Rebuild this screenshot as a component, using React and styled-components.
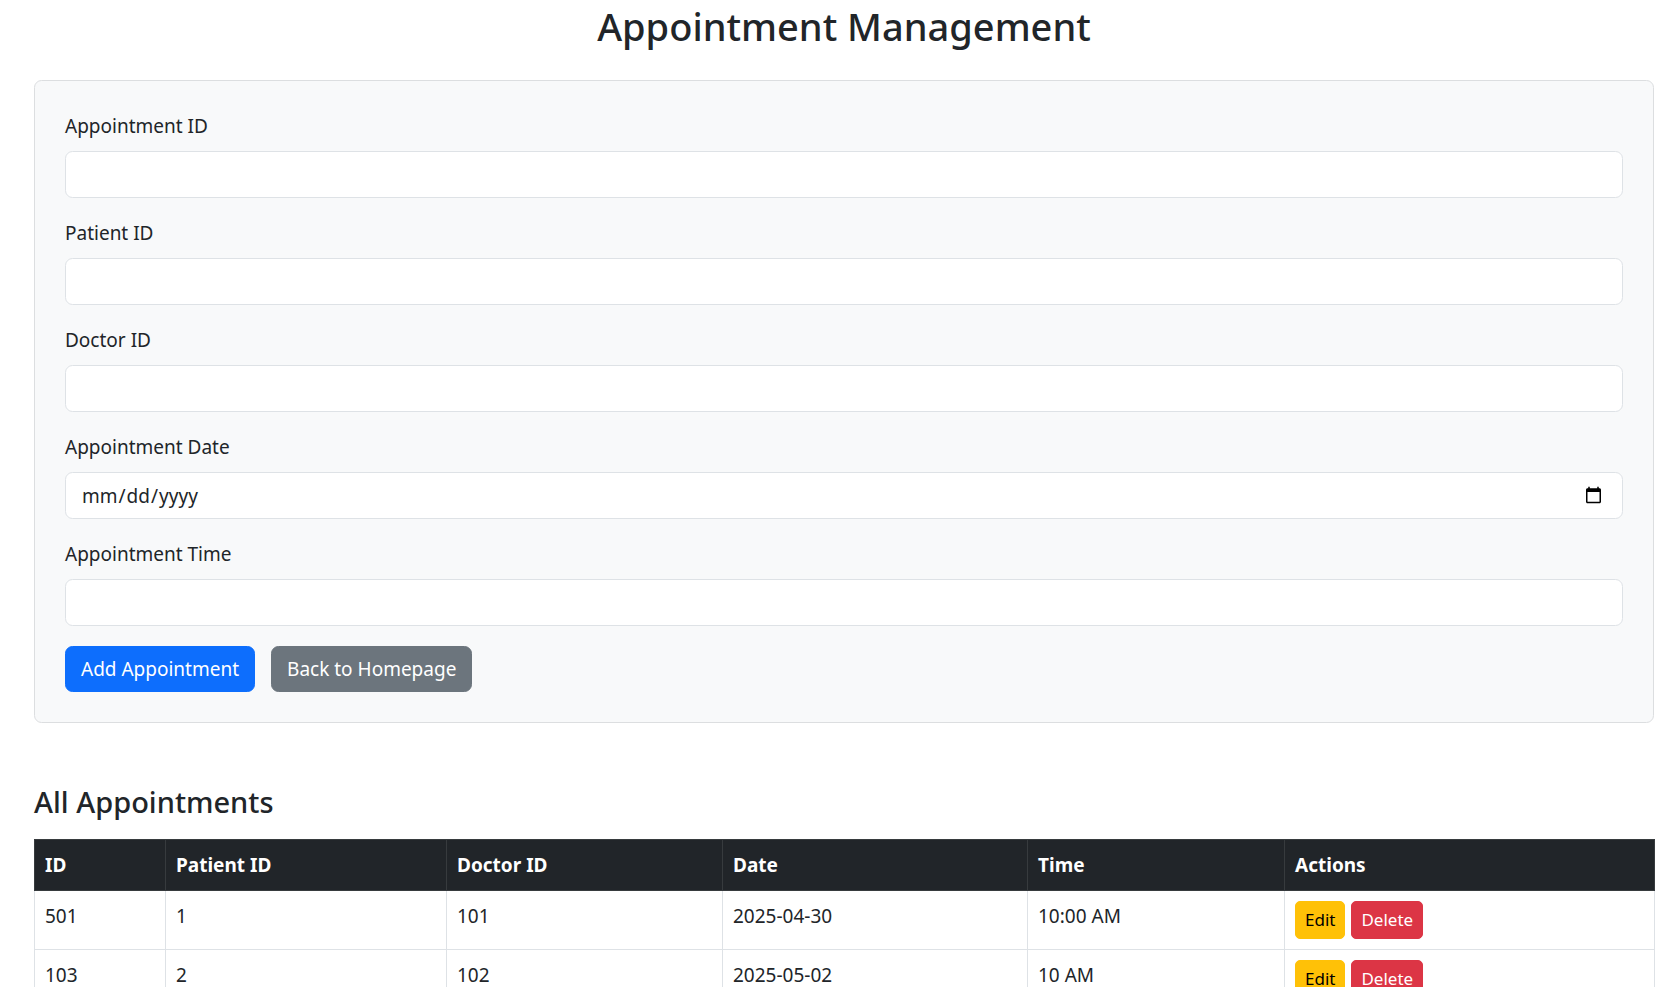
import styled, { createGlobalStyle } from 'styled-components';

const GlobalStyle = createGlobalStyle`
  * {
    box-sizing: border-box;
  }
  body {
    margin: 0;
    background: #fff;
    color: #212529;
    font-family: 'Noto Sans', 'Open Sans', sans-serif;
    font-size: 19px;
    line-height: 30px;
  }
`;

const Page = styled.div`
  padding: 2px 14px 40px 34px;
`;

const Title = styled.h1`
  margin: 0 0 30px;
  font-size: 38px;
  font-weight: 500;
  line-height: 48px;
  text-align: center;
`;

const FormCard = styled.form`
  background: #f8f9fa;
  border: 1px solid #dcdee0;
  border-radius: 7.5px;
  padding: 30px;
`;

const Field = styled.div`
  margin-bottom: 20px;
`;

const Label = styled.label`
  display: block;
  margin-bottom: 10px;
`;

const Input = styled.input`
  display: block;
  width: 100%;
  height: 47px;
  padding: 7px 15px;
  font: inherit;
  color: #212529;
  background: #fff;
  border: 1px solid #dee2e6;
  border-radius: 7.5px;
  outline: none;

  &::-webkit-calendar-picker-indicator {
    margin-right: 2px;
  }
`;

const ButtonRow = styled.div`
  display: flex;
  gap: 16px;
`;

const Button = styled.button`
  font-family: inherit;
  padding: ${p => (p.$small ? '5px 9px' : '7px 15px')};
  font-size: ${p => (p.$small ? '17px' : '19px')};
  line-height: ${p => (p.$small ? '26px' : '30px')};
  border-radius: ${p => (p.$small ? '5px' : '7.5px')};
  border: 1px solid ${p => p.$bg};
  background: ${p => p.$bg};
  color: ${p => p.$fg};
  cursor: pointer;
`;

const SectionTitle = styled.h3`
  margin: 61px 0 19px;
  font-size: 29px;
  font-weight: 500;
  line-height: 36px;
`;

const Table = styled.table`
  width: 100%;
  border-collapse: collapse;
  table-layout: fixed;
`;

const HeadCell = styled.th`
  text-align: left;
  font-weight: 700;
  padding: 10px;
  background: #212529;
  color: #fff;
  border: 1px solid #373b3e;
`;

const Cell = styled.td`
  vertical-align: top;
  padding: 10px;
  border: 1px solid #dee2e6;
`;

const Actions = styled.div`
  display: flex;
  gap: 6px;
`;

const fields = [
  { label: 'Appointment ID', type: 'text' },
  { label: 'Patient ID', type: 'text' },
  { label: 'Doctor ID', type: 'text' },
  { label: 'Appointment Date', type: 'date' },
  { label: 'Appointment Time', type: 'text' },
];

const columns = [
  { name: 'ID', width: 131 },
  { name: 'Patient ID', width: 281 },
  { name: 'Doctor ID', width: 276 },
  { name: 'Date', width: 305 },
  { name: 'Time', width: 257 },
  { name: 'Actions', width: 370 },
];

const appointments = [
  { id: 501, patient: 1, doctor: 101, date: '2025-04-30', time: '10:00 AM' },
  { id: 103, patient: 2, doctor: 102, date: '2025-05-02', time: '10 AM' },
  { id: 104, patient: 3, doctor: 103, date: '2025-05-05', time: '11:30 AM' },
];

export default function App() {
  return (
    <Page>
      <GlobalStyle />
      <Title>Appointment Management</Title>
      <FormCard onSubmit={e => e.preventDefault()}>
        {fields.map(f => (
          <Field key={f.label}>
            <Label>{f.label}</Label>
            <Input type={f.type} />
          </Field>
        ))}
        <ButtonRow>
          <Button type="submit" $bg="#0d6efd" $fg="#fff">Add Appointment</Button>
          <Button type="button" $bg="#6c757d" $fg="#fff">Back to Homepage</Button>
        </ButtonRow>
      </FormCard>

      <SectionTitle>All Appointments</SectionTitle>
      <Table>
        <colgroup>
          {columns.map(c => (
            <col key={c.name} style={{ width: c.width }} />
          ))}
        </colgroup>
        <thead>
          <tr>
            {columns.map(c => (
              <HeadCell key={c.name}>{c.name}</HeadCell>
            ))}
          </tr>
        </thead>
        <tbody>
          {appointments.map(a => (
            <tr key={a.id}>
              <Cell>{a.id}</Cell>
              <Cell>{a.patient}</Cell>
              <Cell>{a.doctor}</Cell>
              <Cell>{a.date}</Cell>
              <Cell>{a.time}</Cell>
              <Cell>
                <Actions>
                  <Button $small $bg="#ffc107" $fg="#000">Edit</Button>
                  <Button $small $bg="#dc3545" $fg="#fff">Delete</Button>
                </Actions>
              </Cell>
            </tr>
          ))}
        </tbody>
      </Table>
    </Page>
  );
}
